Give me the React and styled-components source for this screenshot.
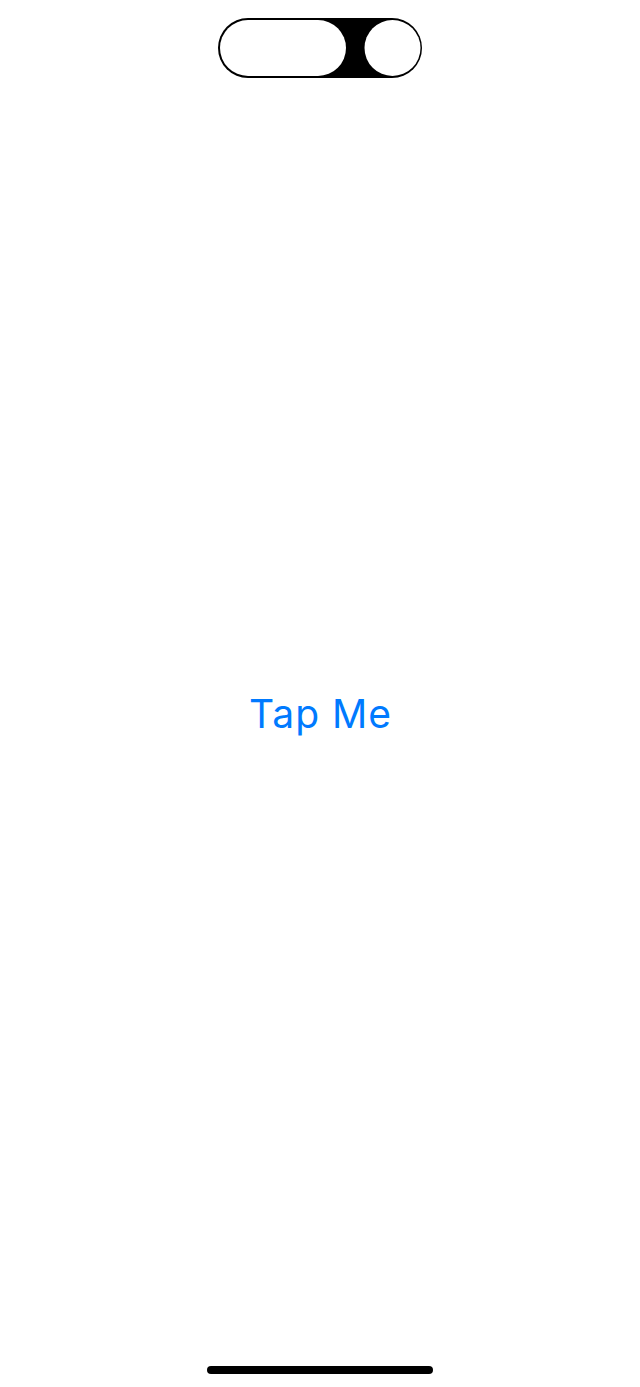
import React from "react";
import styled, { createGlobalStyle } from "styled-components";

const Global = createGlobalStyle`
  html, body { margin: 0; padding: 0; background: #ffffff; }
  body { font-family: Inter, "Noto Sans", "Liberation Sans", sans-serif; }
`;

const Screen = styled.div`
  width: 640px;
  height: 1387px;
  display: flex;
  flex-direction: column;
  align-items: center;
  background: #ffffff;
  overflow: hidden;
`;

const IslandWrap = styled.div`
  margin-top: 18px;
  width: 204px;
  height: 60px;
  display: flex;
`;

const Main = styled.main`
  flex: 1;
  display: flex;
  align-items: center;
  justify-content: center;
  padding-bottom: 16px;
`;

const TapButton = styled.button`
  border: none;
  background: none;
  padding: 0 0 0 1px;
  margin: 0;
  font-family: Inter, "Noto Sans", "Liberation Sans", sans-serif;
  font-size: 39px;
  font-weight: 400;
  color: #007aff;
  letter-spacing: 1px;
  line-height: 46px;
  cursor: pointer;
`;

const HomeBar = styled.div`
  width: 226px;
  height: 8px;
  border-radius: 4px;
  background: #000000;
  margin-bottom: 13px;
`;

function Island() {
  return (
    <svg width="204" height="60" viewBox="0 0 204 60">
      <rect x="0" y="0" width="204" height="60" rx="30" fill="#000" />
      <rect x="2" y="2" width="126" height="56" rx="28" fill="#fff" />
      <circle cx="174.5" cy="30" r="28" fill="#fff" />
    </svg>
  );
}

export default function App() {
  return (
    <>
      <Global />
      <Screen>
        <IslandWrap>
          <Island />
        </IslandWrap>
        <Main>
          <TapButton>Tap Me</TapButton>
        </Main>
        <HomeBar />
      </Screen>
    </>
  );
}
